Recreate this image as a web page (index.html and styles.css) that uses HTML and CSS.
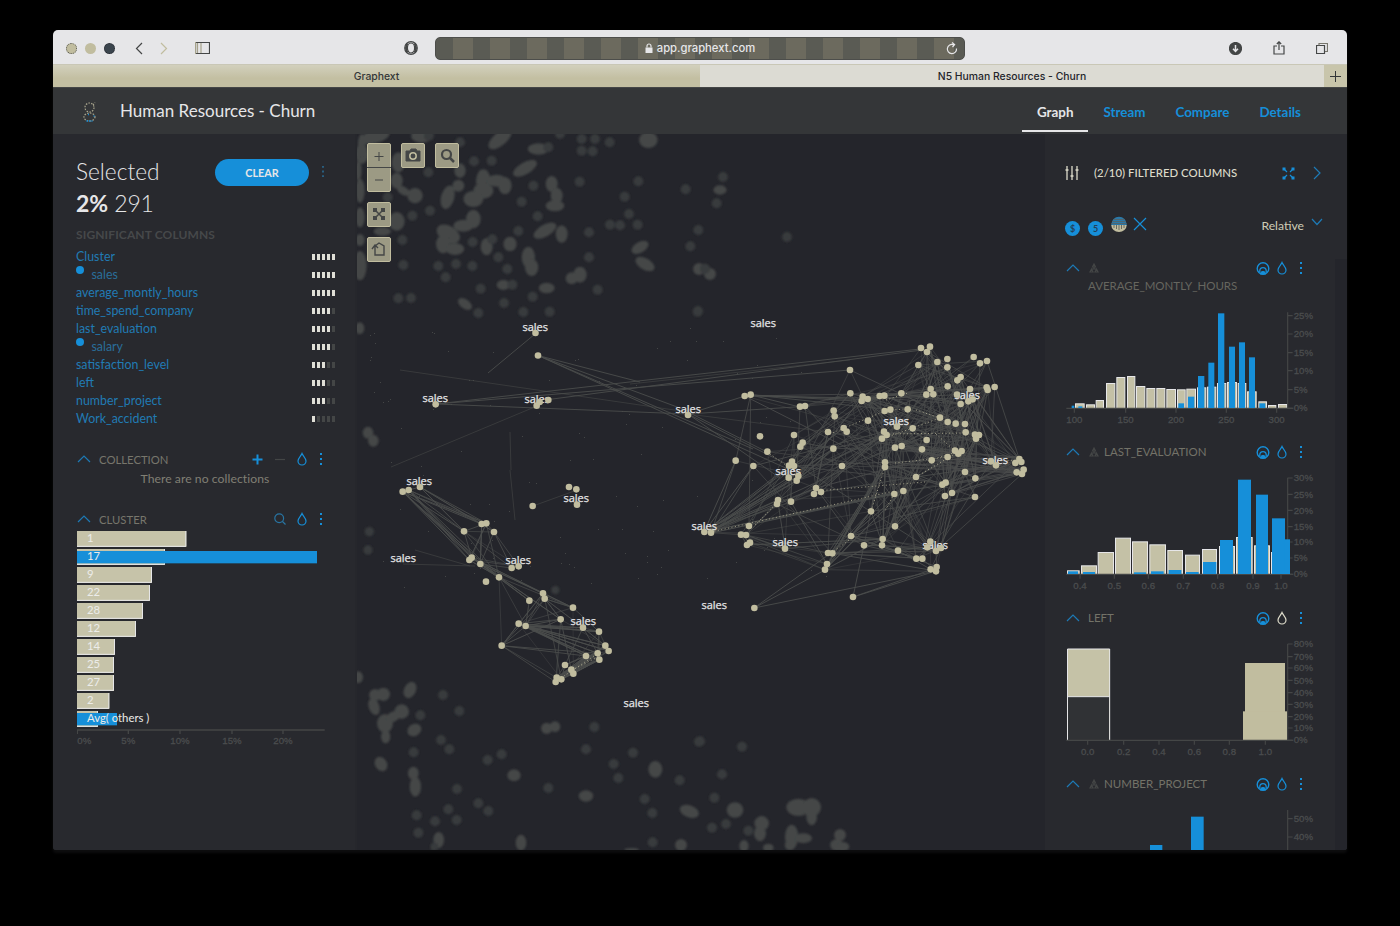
FILE: index.html
```html
<!DOCTYPE html>
<html lang="en">
<head>
<meta charset="utf-8">
<title>N5 Human Resources - Churn</title>
<link rel="stylesheet" href="styles.css">
</head>
<body>
<svg class="defs" width="0" height="0">
  <symbol id="up" viewBox="0 0 14 8"><path d="M1 7 7 1l6 6"/></symbol>
  <symbol id="drop" viewBox="0 0 12 14"><path d="M6 1.500C5 4 2 6 2 9a4 4 0 0 0 8 0C10 6 7 4 6 1.500Z"/></symbol>
  <symbol id="dots" viewBox="0 0 4 14"><path d="M1 1h2v2H1zM1 6h2v2H1zM1 11h2v2H1z" fill="currentColor" stroke="none"/></symbol>
  <symbol id="target" viewBox="0 0 14 14"><circle cx="7" cy="7.500" r="5.800" stroke-width="1.400"/><path d="M3.800 11V9.800a3.200 3.200 0 0 1 6.400 0V11" stroke-width="1.300"/><path d="M4.800 13a2.200 2.400 0 0 1 4.400 0Z" fill="currentColor"/></symbol>
  <symbol id="tree" viewBox="0 0 10 10"><path d="M5 1 3.500 4h3ZM2.500 6 1 9h3ZM7.500 6 6 9h3ZM5 4v2M2.500 6h5"/></symbol>
</svg>
<div class="window">
  <div class="toolbar">
    <div class="tools left">
      <i class="light"></i><i class="light two"></i><i class="light three"></i>
      <svg class="ic back" width="8" height="13" viewBox="0 0 8 13"><path d="M7 1 1.500 6.500 7 12"/></svg>
      <svg class="ic fwd" width="8" height="13" viewBox="0 0 8 13"><path d="m1 1 5.500 5.500L1 12"/></svg>
      <svg class="ic side" width="15" height="12" viewBox="0 0 15 12"><path d="M.5.500h14v11H.5z"/><path d="M.5 0v12M2.500 1v10M6 1v10" stroke="#a5a28b"/></svg>
    </div>
    <svg class="ic shield" width="14" height="14" viewBox="0 0 14 14"><circle cx="7" cy="7" r="6.300"/><ellipse cx="7" cy="7" rx="3.600" ry="5"/><path d="M3.500 2.500C1.500 5 1.500 9 3.500 11.500M10.500 2.500c2 2.500 2 6.500 0 9" stroke-width="2"/></svg>
    <div class="url">
      <svg width="8" height="10" viewBox="0 0 8 10"><path d="M2 4.500V3a2 2 0 0 1 4 0v1.500" fill="none" stroke="#e6e6e8" stroke-width="1.200"/><path d="M.5 4.500h7V10h-7z" fill="#e6e6e8"/></svg>
      <span>app.graphext.com</span>
      <svg class="reload" width="12" height="13" viewBox="0 0 12 13"><path d="M10.500 6.500A4.600 4.600 0 1 1 7.500 2.700M6 .5l2.600 2L6.500 5" fill="none" stroke="#e6e6e8" stroke-width="1.200"/></svg>
    </div>
    <div class="tools right">
      <svg class="ic" width="13" height="13" viewBox="0 0 13 13"><circle cx="6.500" cy="6.500" r="6" fill="#444646"/><path d="M6.500 3v6M4 6.800l2.500 2.700L9 6.800" stroke="#e6e6e8" stroke-width="1.500"/></svg>
      <svg class="ic" width="12" height="14" viewBox="0 0 12 14"><path d="M4 5H1v8h10V5H8"/><path d="M6 9V1M3.800 3 6 .8 8.200 3"/></svg>
      <svg class="ic" width="12" height="13" viewBox="0 0 12 13"><path d="M.5 3.500h8v8h-8z"/><path d="M3 3.500v-2h8.500v8H9" stroke="#77766c"/></svg>
    </div>
  </div>
  <div class="tabs">
    <div class="tab">Graphext</div>
    <div class="tab on">N5 Human Resources - Churn</div>
    <div class="plus"><svg width="11" height="11" viewBox="0 0 11 11"><path d="M5.500 0v11M0 5.500h11" stroke="#333638"/></svg></div>
  </div>
  <header class="head">
    <svg class="logo" width="16" height="22" viewBox="0 0 16 22"><g fill="none" stroke="#aaa78f" stroke-width="1.200" stroke-dasharray="1.500 1.300"><circle cx="7.500" cy="6.500" r="4.500"/><path d="M11 4l2-2.500"/><ellipse cx="7.500" cy="16" rx="5.500" ry="4"/></g><path d="M4.500 20h6M6 13.500h1M11.500 15h1" stroke="#168fd9" stroke-width="1.300" stroke-dasharray="1.500 1"/></svg>
    <h1>Human Resources - Churn</h1>
    <nav><a class="on">Graph</a><a>Stream</a><a>Compare</a><a>Details</a></nav>
  </header>
  <main class="body">
    <aside class="panel left-panel">
      <div class="sel"><span class="big">Selected</span><button>CLEAR</button><svg class="i kebab" width="4" height="13"><use href="#dots"/></svg></div>
      <div class="count"><b>2%</b> 291</div>
      <div class="sig">SIGNIFICANT COLUMNS</div>
      <div class="cols" id="cols"></div>
      <div class="sec first"><svg class="i dim" width="14" height="8"><use href="#up"/></svg><span>COLLECTION</span>
        <svg class="i add" width="11" height="11" viewBox="0 0 11 11"><path d="M5.500.500v10M.5 5.500h10" stroke-width="2"/></svg>
        <svg class="i minus" width="10" height="11" viewBox="0 0 10 11"><path d="M0 5.500h10"/></svg>
        <svg class="i blue d" width="12" height="14"><use href="#drop"/></svg><svg class="i blue m" width="4" height="14"><use href="#dots"/></svg></div>
      <div class="none">There are no collections</div>
      <div class="sec"><svg class="i dim" width="14" height="8"><use href="#up"/></svg><span>CLUSTER</span>
        <svg class="i find" width="12" height="12" viewBox="0 0 12 12"><circle cx="5.200" cy="5.200" r="4.400"/><path d="m8.500 8.500 3 3"/></svg>
        <svg class="i blue d" width="12" height="14"><use href="#drop"/></svg><svg class="i blue m" width="4" height="14"><use href="#dots"/></svg></div>
      <svg class="cluster" id="cluster" width="270" height="222" viewBox="72 300 810 666"></svg>
    </aside>
    <section class="graph">
      <svg id="graph" width="688" height="716" viewBox="357 134 688 716"></svg>
      <div class="ctl">
        <div class="stack">
          <div class="btn tall"><svg width="24" height="49" viewBox="0 0 24 49"><path d="M12 9v9M7.500 13.500h9M8 37h8M0 24.500h24"/></svg></div>
          <div class="btn"><svg width="24" height="24" viewBox="0 0 24 24"><path d="m8 8 8 8M16 8l-8 8" stroke-width="1.500"/><path d="M6 6h4v4H6zM14 6h4v4h-4zM6 14h4v4H6zM14 14h4v4h-4z" fill="#444646" stroke="none"/></svg></div>
          <div class="btn"><svg width="24" height="24" viewBox="0 0 24 24"><path d="M8 9 12 6l5 3v9H8zM5 12l3-4 3 3" stroke-width="1.400"/></svg></div>
        </div>
        <div class="btn"><svg width="24" height="24" viewBox="0 0 24 24"><path d="M5 8h4l1-2h5l1 2h3v10H5z" fill="#444646"/><circle cx="12" cy="13" r="3.200" stroke="#c1bd9f" stroke-width="1.500"/></svg></div>
        <div class="btn"><svg width="24" height="24" viewBox="0 0 24 24"><circle cx="11.500" cy="11.500" r="4.500" stroke-width="2.200"/><path d="m15 15 4 4" stroke-width="2.500"/></svg></div>
      </div>
    </section>
    <aside class="panel right-panel">
      <div class="filt">
        <svg class="i white" width="14" height="14" viewBox="0 0 14 14"><path d="M2 0v14M7 0v14M12 0v14M.5 4h3M5.500 10h3M10.500 4h3" stroke-width="1.300"/></svg>
        <span>(2/10) FILTERED COLUMNS</span>
        <svg class="i blue ex" width="13" height="13" viewBox="0 0 13 13"><path d="m1.500 1.500 3.500 3.500M11.500 1.500 8 5M1.500 11.500 5 8M11.500 11.500 8 8"/><path d="M.5.500h3v3h-3zM9.500.500h3v3h-3zM.5 9.500h3v3h-3zM9.500 9.500h3v3h-3z" fill="currentColor" stroke="none"/></svg>
        <svg class="i dim" width="8" height="14" viewBox="0 0 8 14"><path d="m1 1 6 6-6 6"/></svg>
      </div>
      <div class="chips">
        <span class="chip">$</span><span class="chip">5</span>
        <svg class="half" width="16" height="16" viewBox="0 0 16 16"><path d="M.3 8.500a7.700 7.700 0 0 1 15.400 0v1H.3z" fill="#2a78a8"/><path d="M2.500 3.500h11M1 5.500h14M.5 7.500h15" stroke="#4f6670"/><path d="M.3 9a7.700 7 0 0 0 15.400 0z" fill="#c1bd9f"/><path d="M3 9v3M5.500 9v4M8 9v5M10.500 9v4M13 9v3" stroke="#6a6a60"/></svg>
        <svg class="i blue x" width="14" height="14" viewBox="0 0 14 14"><path d="m1 1 12 12M13 1 1 13"/></svg>
        <span class="rel">Relative</span>
        <svg class="i dim dn" width="12" height="8" viewBox="0 0 12 8"><path d="m1 1 5 5.500L11 1"/></svg>
      </div>
      <div class="charts" id="charts"></div>
    </aside>
  </main>
</div>
<script src="main.js"></script>
</body>
</html>
```
FILE: styles.css
```css
* { box-sizing: border-box; }
body { margin: 0; padding: 30px 53px; height: 926px; background: #000; overflow: hidden; font-family: Lato, "Open Sans", sans-serif; color: #e6e6e8; }
svg { display: block; flex: none; }
.defs { position: absolute; }
.window { width: 1294px; height: 820px; border-radius: 5px 5px 3px 3px; overflow: hidden; background: #24252b; box-shadow: 0 3px 3px #0d0d0e; }
.toolbar { height: 35px; background: #e6e6e8; display: flex; align-items: center; padding: 2px 19px 0 13px; border-bottom: 1px solid #c9c7b6; }
.tools { display: flex; align-items: center; }
.tools.left { width: 338px; }
.tools.right { margin-left: auto; gap: 31px; }
.light { width: 11px; height: 11px; border-radius: 50%; background: #c1bd9f; border: 1px dotted #55564f; margin-right: 8px; }
.light.two { border: 0; }
.light.three { background: #3b454d; border-color: #24252b; margin-right: 20px; }
.ic { fill: none; stroke: #444646; stroke-width: 1.200; }
.fwd { stroke: #c1bd9f; margin-left: 17px; }
.side { margin-left: 27px; }
.url { width: 530px; height: 23px; margin-left: 17px; border-radius: 5px; background: repeating-linear-gradient(90deg, #5a5b54 0 17px, #6c6a5e 17px 37px); display: flex; align-items: center; justify-content: center; gap: 4px; font: 500 11.250px Inter, sans-serif; border: 1px solid #4d4e4b; position: relative; }
.reload { position: absolute; right: 6px; }
.tabs { height: 23px; display: flex; font: 500 10.400px/24px Inter, sans-serif; color: #333638; text-align: center; border-bottom: 1px solid #444646; }
.tab { width: 647px; background: linear-gradient(#d2d0bd, #c3bfa2 60%); }
.tab.on { width: 624px; background: #dcdbd3; color: #24252b; }
.plus { width: 23px; background: #c8c5ab; display: flex; align-items: center; justify-content: center; }
.head { height: 46px; background: #343638; display: flex; align-items: center; padding-left: 29px; }
.logo { margin-top: 2px; }
.head h1 { margin: -1px 0 0 22px; font-size: 17px; font-weight: 400; }
.head nav { margin-left: auto; display: flex; padding-right: 31px; font-size: 13.400px; font-weight: 700; color: #168fd9; height: 44px; align-self: flex-start; }
.head nav a { padding: 0 15px; line-height: 48px; }
.head nav .on { color: #e6e6e8; border-bottom: 2px solid #e6e6e8; }
.body { display: flex; height: 716px; }
.panel { width: 302px; background: #28292e; }
.left-panel { padding: 21px 0 0 23px; width: 304px; border-right: 2px solid #26272c; }
.i { fill: none; stroke: currentColor; stroke-width: 1.200; }
.blue { color: #168fd9; }
.dim { color: #1d7ab6; }
.kebab { color: #2a6387; }
.white { color: #dedccb; }
.sel { display: flex; align-items: center; height: 32px; }
.big { font-size: 22.700px; font-weight: 300; width: 139px; }
.sel button { width: 94px; height: 27px; border: 0; border-radius: 14px; background: #168fd9; color: #e6e6e8; font: 700 10.800px Lato, sans-serif; margin-right: 12px; padding: 0; margin-top: 3px; }
.count { font-size: 23px; line-height: 32px; font-weight: 300; letter-spacing: -.1px; }
.count b { font-weight: 700; }
.sig { font-size: 12px; line-height: 18px; color: #46484a; font-weight: 700; margin-top: 7px; letter-spacing: .12px; }
.cols { margin-top: 4px; }
.row { height: 18px; display: flex; align-items: center; font-size: 12.400px; color: #217bb4; padding-bottom: 1px; }
.row.sub { color: #2a6e9a; }
.row.sub::before { content: ""; width: 8px; height: 8px; border-radius: 50%; background: #168fd9; margin: -10px 7.500px 0 0; }
.meter { margin: 1px 20px 0 auto; display: flex; gap: 2px; }
.meter i { width: 3px; height: 6px; background: #444646; }
.meter .f { background: #e0dfd7; }
.sec { height: 18px; display: flex; align-items: center; margin-top: 23px; font-size: 11.300px; color: #77766c; padding: 0 32px 0 1px; }
.sec.first { margin-top: 22px; }
.sec span { margin: 0 auto 0 8px; }
.add { color: #168fd9; margin-right: 12px; }
.minus { color: #444646; margin-right: 11px; }
.find { color: #2874a2; margin-right: 10px; }
.sec .d { margin-right: 11px; }
.none { height: 18px; line-height: 19px; font-size: 12.200px; color: #807f74; padding-left: 64.500px; letter-spacing: .05px; margin-top: 1px; }
.none + .sec { margin-top: 23px; }
.cluster { margin: 2px 0 0 1px; }
.graph { width: 688px; position: relative; background: #24252b; }
.ctl { position: absolute; left: 10px; top: 9px; display: flex; gap: 10px; align-items: flex-start; }
.stack { display: flex; flex-direction: column; gap: 10px; }
.btn { width: 24px; height: 25px; border-radius: 2px; background: #9c9a84; border: 1px solid #c1bd9f; }
.btn svg { fill: none; stroke: #444646; margin: -1px; }
.btn.tall { height: 49px; }
.right-panel { padding: 28px 0 0 20px; }
.filt { display: flex; align-items: center; height: 22px; padding-right: 26px; font-size: 11.400px; color: #dedccb; font-weight: 500; }
.filt span { margin: -2px auto 0 15px; }
.ex { margin-right: 18px; }
.chips { height: 75px; display: flex; align-items: center; padding: 10px 24px 0 0; }
.chip { width: 15px; height: 15px; border-radius: 50%; background: #168fd9; color: #24405a; font: 700 9px/15px Lato, sans-serif; text-align: center; margin: 3px 8px 0 0; }
.half { margin-top: -6px; }
.x { margin: -5px 0 0 6px; }
.rel { margin: 0 7px 0 auto; font-size: 12.200px; color: #cfccb6; padding-bottom: 2px; }
.dn { margin-top: -9px; }
.charts { height: 591px; border-right: 12px solid #24252b; overflow: hidden; }
.ch { height: 18px; display: flex; align-items: center; padding: 0 32px 0 1px; font-size: 11.500px; color: #737268; }
.ch .tree { margin-left: 9px; color: #444646; }
.ch .nm { margin: -1px auto 0 5px; }
.ch .notree { margin-left: 8px; }
.ch .d { margin: 0 11px 0 6px; }
.wrap { height: 18px; font-size: 11.500px; line-height: 17px; color: #66665f; padding-left: 23px; }
.plot text, .cluster .ax { font: 29px "Liberation Sans", sans-serif; fill: #4b4d4e; stroke: #4b4d4e; stroke-width: .8px; }
```
FILE: main.js
```js
const $ = id => document.getElementById(id);
const BLUE = '#168fd9', GREY = '#444646', PALE = '#e6e6e8';
const rect = (x, y, w, h, f, s = '') => `<rect x="${x}" y="${y}" width="${w}" height="${h}" fill="${f}" ${s}/>`;

$('cols').innerHTML = [['Cluster', 5], ['sales', 5, 1], ['average_montly_hours', 5], ['time_spend_company', 4],
  ['last_evaluation', 4], ['salary', 4, 1], ['satisfaction_level', 3], ['left', 3], ['number_project', 3], ['Work_accident', 1]]
  .map(([n, v, s]) => `<div class="row${s ? ' sub' : ''}"><span>${n}</span><div class="meter">${
    [0, 1, 2, 3, 4].map(i => `<i${i < v ? ' class="f"' : ''}></i>`).join('')}</div></div>`).join('');

// Cluster bar chart
let c = '';
[['1', 400], ['17', 336], ['9', 297], ['22', 291], ['28', 270], ['12', 249], ['14', 186], ['25', 183], ['27', 183], ['2', 169], ['Avg( others )', 135]]
  .forEach(([n, w], i) => {
    const y = 303 + i * 54;
    c += rect(72, y, w - 72, 48, '#c6c3a9') + `<path d="M72 ${y + 46}H${w - 1.5}V${y}" fill="none" stroke="${PALE}" stroke-width="3"/>`;
    if (i === 1) c += rect(72, y + 6, 720, 37, BLUE);
    if (i === 10) c += rect(72, y + 6, 120, 37, BLUE);
    c += `<text x="102" y="${y + 33}" font-size="34" fill="#ecece9">${n}</text>`;
  });
c += `<path d="M72 900H815M73 900v12M226 900v12M381 900v12M537 900v12M690 900v12" stroke="${GREY}" stroke-width="4" fill="none"/>`;
[[94, '0%'], [226, '5%'], [381, '10%'], [537, '15%'], [690, '20%']].forEach(([x, t]) => c += `<text class="ax" text-anchor="middle" x="${x}" y="943">${t}</text>`);
$('cluster').innerHTML = c;

// Column histograms
const charts = [
  { name: 'AVERAGE_MONTLY_HOURS', wrap: true, y0: 483, h: 444, base: 822, top: 535,
    bars: [[90,29,808],[123,27,811],[152,25,798],[183,28,747],[214,27,729],[246,25,726],[273,28,756],[304,27,762],[334,27,762],[364,29,765],[396,26,766],[424,29,764],[456,28,760],[486,28,758],[516,28,747],[546,30,744],[578,26,747],[606,29,772],[640,26,802],[669,25,813],[699,28,810]],
    blue: [[80,8,815],[100,12,817],[400,17,808],[429,19,788],[459,19,726],[490,18,686],[519,19,538],[552,18,638],[582,18,625],[612,18,670],[643,18,808]],
    ys: [[545,'25%'],[600,'20%'],[656,'15%'],[710,'10%'],[767,'5%'],[822,'0%']], xs: [[88,'100'],[242,'150'],[393,'200'],[544,'250'],[695,'300']], xl: 866 },
  { name: 'LAST_EVALUATION', tree: true, y0: 93, h: 444, base: 432, top: 143,
    bars: [[66,38,421],[108,48,406],[158,49,366],[210,48,323],[261,48,334],[313,50,343],[367,47,360],[420,45,374],[471,45,357],[522,48,348],[573,50,321],[627,48,346],[678,48,366]],
    blue: [[69,30,424],[114,36,426],[267,36,427],[318,38,424],[371,38,420],[423,38,426],[474,40,396],[525,39,330],[579,39,149],[633,36,194],[681,39,265],[718,17,328]],
    ys: [[144,'30%'],[193,'25%'],[241,'20%'],[290,'15%'],[336,'10%'],[384,'5%'],[432,'0%']], xs: [[105,'0.4'],[208,'0.5'],[310,'0.6'],[415,'0.7'],[518,'0.8'],[624,'0.9'],[708,'1.0']], xl: 476 },
  { name: 'LEFT', light: true, y0: 81, h: 444, base: 420, top: 132, bars: [], blue: [],
    extra: rect(67,147,128,273,'#c5c2a7') + rect(69,290,124,130,'#303235') + `<path d="M67.500 420V147H194V420M68 290H193" fill="none" stroke="${PALE}" stroke-width="3"/>` + rect(600,189,120,231,'#c1bd9f') + rect(594,334,132,86,'#c1bd9f'),
    ys: [[132,'80%'],[170,'70%'],[204,'60%'],[241,'50%'],[278,'40%'],[313,'30%'],[350,'20%'],[384,'10%'],[420,'0%']], xs: [[128,'0.0'],[236,'0.2'],[342,'0.4'],[448,'0.6'],[553,'0.8'],[661,'1.0']], xl: 465 },
  { name: 'NUMBER_PROJECT', tree: true, y0: 579, h: 171, base: 800, top: 630, bars: [], blue: [[315,37,735],[438,38,650]], ys: [[656,'50%'],[711,'40%']], xs: [], xl: 0 }
];
$('charts').innerHTML = charts.map(d => {
  const tree = '<svg class="i tree" width="10" height="10"><use href="#tree"/></svg>';
  let s = '';
  d.bars.forEach(([x, w, y]) => s += rect(x + 1.5, y + 1.5, w - 3, d.base - y, '#c4c1a6', `stroke="${PALE}" stroke-width="3"`));
  s += d.extra || '';
  s += `<path d="M64 ${d.base + 1}H745M728 ${d.top}V${d.base}${d.ys.map(([y]) => `M728 ${y}h15`).join('')}${d.xs.map(([x]) => `M${x} ${d.base}v14`).join('')}" stroke="${GREY}" stroke-width="3.500" fill="none"/>`;
  d.blue.forEach(([x, w, y]) => s += rect(x, y, w, d.base - y, BLUE));
  d.ys.forEach(([y, t]) => s += `<text x="746" y="${y + 10}">${t}</text>`);
  d.xs.forEach(([x, t]) => s += `<text text-anchor="middle" x="${x}" y="${d.xl}">${t}</text>`);
  return `<div class="ch"><svg class="i dim" width="14" height="8"><use href="#up"/></svg>${d.tree || d.wrap ? tree : ''}<span class="nm${d.light ? ' notree' : ''}">${d.wrap ? '' : d.name}</span>
    <svg class="i blue" width="14" height="14"><use href="#target"/></svg><svg class="i ${d.light ? 'white' : 'blue'} d" width="12" height="14"><use href="#drop"/></svg><svg class="i blue" width="4" height="14"><use href="#dots"/></svg></div>
    ${d.wrap ? `<div class="wrap">${d.name}</div>` : ''}
    <svg class="plot" width="270" height="${d.h / 3}" viewBox="60 ${d.y0} 810 ${d.h}">${s}</svg>`;
}).join('');

// Network graph: selected nodes, grouped by area; coordinates are thirds of a pixel
const east = [[693,144],[720,140],[711,156],[742,186],[772,177],[772,202],[685,195],[480,210],[851,171],[870,190],[891,183],[914,261],[890,262],[893,270],[812,231],[802,241],[773,259],[722,267],[730,283],[709,284],[634,280],[583,287],[569,288],[518,290],[533,297],[515,303],[481,280],[164,288],[182,284],[840,267],[801,284],[835,304],[848,298],[812,312],[330,320],[345,318],[431,332],[434,349],[584,333],[601,329],[653,328],[534,362],[461,384],[470,395],[414,396],[621,380],[668,385],[582,395],[590,405],[576,416],[750,353],[773,366],[797,371],[825,372],[827,397],[855,404],[867,405],[858,416],[710,420],[696,448],[635,438],[615,443],[430,446],[312,405],[338,428],[331,440],[210,409],[232,455],[137,482],[190,498],[306,485],[297,497],[312,498],[296,533],[325,528],[320,542],[456,498],[585,487],[585,501],[725,481],[773,471],[795,452],[815,453],[805,461],[903,484],[918,496],[976,489],[988,477],[994,486],[1001,509],[980,517],[996,522],[825,516],[856,535],[678,531],[757,554],[767,548],[786,579],[765,588],[855,591],[613,582],[640,573],[378,564],[372,582],[393,576],[303,605],[264,600],[261,612],[543,634],[615,679],[177,678],[153,704],[168,705],[180,728],[171,735],[43,696],[63,698],[285,746],[483,708],[522,736],[578,717],[576,736],[624,752],[414,759],[427,760],[411,792],[405,809],[679,776],[697,776],[721,725],[712,742],[738,753],[753,744],[740,801],[722,808],[738,814],[489,891],[193,924]];
const west = [[143,335],[161,330],[195,321],[380,432],[394,430],[327,454],[417,456],[350,533],[343,540],[376,552],[470,564],[491,559],[432,592],[393,605],[564,640],[569,656],[523,662],[654,683],[617,718],[491,731],[512,738],[684,743],[732,755],[440,797],[751,797],[761,813],[728,820],[733,839],[693,828],[630,855],[649,869],[655,881],[605,893],[619,898],[602,906]];
const lone = [[242,73],[545,77],[580,60],[554,66],[642,321],[664,328],[666,374],[533,378],[540,-49],[549,-25],[999,105]];
const E = east.map(([x, y]) => [690 + x / 3, 300 + y / 3]), W = west.map(([x, y]) => [355 + x / 3, 380 + y / 3]);
const L = lone.map(([x, y]) => [355 + x / 3, 380 + y / 3]);
L[8] = [535.5, 333]; L[9] = [538, 355.5];
let seed = 11;
const rnd = () => (seed = (seed * 16807) % 2147483647) / 2147483647;
let lines = '';
const link = (a, b, o = .75, col = '#4b4d4c') => lines += `<path d="M${a[0].toFixed(1)} ${a[1].toFixed(1)}L${b[0].toFixed(1)} ${b[1].toFixed(1)}" stroke="${col}" opacity="${o}"/>`;
const mesh = (P, n, max) => { let k = 0, t = 0; while (k < n && t++ < 20000) { const a = P[rnd() * P.length | 0], b = P[rnd() * P.length | 0]; const d = Math.hypot(a[0] - b[0], a[1] - b[1]); if (a !== b && d < max * (.35 + rnd() * .65) && !(Math.min(a[0], b[0]) > 850 && Math.max(a[1], b[1]) > 560 && Math.min(a[1], b[1]) < 480 && Math.max(a[0], b[0]) > 960)) { link(a, b, .35 + rnd() * .6); k++; } } };
const dense = E.filter(p => p[1] < 565);
mesh(dense, 340, 200);
mesh(dense.filter(p => p[0] > 850), 110, 120);
mesh(E.filter(p => p[1] > 530 && p[1] < 575 && p[0] > 735), 45, 180);
mesh(W.slice(12), 80, 90);
mesh(W.slice(0, 13), 30, 90);
const near = (x, y) => E.reduce((m, p) => Math.hypot(p[0] - x, p[1] - y) < Math.hypot(m[0] - x, m[1] - y) ? p : m);
[[736,461],[753,466],[788,467],[796,475],[798,480],[778,502],[816,490],[894,494],[903,491],[833,449],[846,429]].forEach(([x, y]) => { link([704, 532], near(x, y), 1); link([711, 533], near(x, y), .85); });
[[1020,457],[1024,470],[1017,473]].forEach(p => [[885,462],[931,460],[958,451],[942,485],[948,493],[895,447],[885,467]].forEach(q => link(p, near(...q), .8)));
[[831,553],[825,569],[825,570],[883,546]].forEach(p => [[885,462],[885,467],[871,511],[903,491]].forEach(q => link(p, q, .9)));
[[895,526],[885,539]].forEach(p => [[922,440],[926,450],[910,400]].forEach(q => link(p, q, .7)));
[[[754,608],[936,571]],[[754,608],[831,553]],[[754,608],[825,570]],[[853,597],[936,571]],[[853,597],[864,545]],[[853,597],[936,568]],[[975,497],[895,518]],[[895,526],[931,477]],[[831,553],[916,558]],[[936,571],[831,553]],[[785,548],[778,502]]].forEach(([a, b]) => link(a, b, .95));
const hub = W[0];
[3, 4, 5, 7, 8, 9, 12].forEach(i => { link(hub, W[i], 1); link(W[1], W[i], .9); });
[3, 4, 6].forEach(i => link(W[2], W[i], .9));
[14, 16, 17, 18, 12].forEach(i => { link(W[7], W[i], .9); link(W[9], W[i], .9); });
[18, 21, 22, 24, 25, 26, 27, 28].forEach(i => { link(W[19], W[i], .9); link(W[20], W[i], 1); });
[32, 33, 34, 30, 31].forEach(i => [26, 27, 24, 28].forEach(j => link(W[i], W[j], 1)));
[19, 15, 14, 26, 28].forEach(i => link(W[23], W[i], .9));
const out = [[[538,355.5],[688,411]],[[538,355.5],[640,382]],[[538,355.5],[753,449]],[[538,355.5],[790,470]],[[436,404],[850,370]],[[436,404],[920,349]],[[436,404],[688,414]],[[545,400],[922,350]],[[535,334],[488,373]],[[688,414],[780,478]],[[688,414],[810,406]],[[688,414],[745,396]],[[688,414],[798,470]],[[688,412],[767,452]],[[745,396],[865,398]],[[751,395],[872,400]],[[751,395],[857,401]],[[751,395],[800,407]],[[400,370],[688,412]],[[391,467],[537,406]],[[415,550],[470,566]],[[403,564],[475,566]],[[510,432],[511,470]],[[510,470],[515,520]],[[688,414],[890,440]],[[533,506],[577,490]],[[630,384],[850,360]]];
out.forEach(([a, b], i) => link(a, b, i < 18 ? .95 : .55));
let flecks = '';
[[[894,494],[885,511]],[[871,511],[885,467]],[[767,452],[800,475]],[[830,434],[885,411]],[[886,400],[908,393]],[[885,410],[908,409]],[[916,410],[940,418]],[[886,434],[965,433]],[[882,439],[940,418]],[[931,460],[960,451]],[[916,477],[958,452]],[[816,491],[925,482]],[[711,532],[890,492]],[[755,525],[777,503]],[[895,463],[948,457]],[[990,461],[1020,460]],[[831,553],[855,536]],[[558,680],[600,652]],[[572,670],[600,656]],[[936,434],[955,451]]].forEach(([a, b]) => flecks += `<path d="M${a}L${b}" stroke="#bdb99b" stroke-width="1" stroke-dasharray="1 2.500" opacity=".8"/>`);

// Out-of-focus background nodes: [x, y, rx, ry, angle]
const blobs = [];
const add = (ox, oy, list) => list.forEach(([x, y, r = 15, q = r, a = 0]) => blobs.push([ox + x / 3, oy + y / 3, r / 3, q / 3, a]));
add(355, 134, [[60,8,45,20,-15],[200,5,32,22],[315,25],[435,15,42,20,-40],[550,45,32,17],[580,40],[615,0],[680,15],[720,15],[680,50],[713,52],[764,25],[880,18,28,24],[20,60,20,30],[10,110,10,30],[15,170,14,36],[125,140,18,24],[130,85,20,30],[180,185,23],[145,170,22,12,30],[98,190],[220,115],[222,5],[315,110,17,22],[357,82],[410,80],[510,103,40,18,-30],[385,140,22,34],[385,170,30,24],[355,195,30,24],[425,140,30,18],[450,155,20,26],[310,155,18],[278,190,20,36,15],[535,155],[590,150,18,24],[605,185,18,24],[600,215,28,17],[500,203],[674,143],[850,142],[992,166],[809,188],[822,240],[765,272],[795,274],[848,272],[225,230],[172,245],[125,262,24,28],[15,250,14,30],[355,255,22,28],[325,275,30,18],[280,300,38,24,30],[265,330,22,28],[300,345,28,18],[82,292,26,13],[142,318],[15,318,14,18],[353,324],[395,338,18,26],[412,316],[465,330,20,22],[490,291],[548,247],[570,290,38,18,-30],[620,300,18,26],[702,295],[520,370,20,32],[530,400,20,26],[430,370],[457,405],[702,370],[855,340,28,16,-30],[870,390,32,17,30],[1006,337],[1032,405,18],[15,395,20,44],[145,393],[250,396],[303,390],[352,396],[272,430],[377,464],[445,453,20,15],[472,452],[575,462,24,16],[675,422,20,24],[650,433,18],[728,467],[130,493],[168,492],[330,510,24,14,35],[370,537],[447,507],[505,534],[533,488],[584,533],[1028,533],[14,583,14,18],[20,36,12,36]]);
add(355, 660, [[10,52,14,18],[85,103,20],[60,105,18],[57,140,16,26,-20],[90,190,24,28],[92,230,14,20],[140,155,22],[115,170,24,15,-30],[165,90,18,26,25],[196,166],[178,210,22,18,-30],[264,105],[313,153],[258,240],[283,268],[176,277],[78,312,18,23,-30],[175,340,16,20],[181,380,17,30],[306,387],[185,466],[190,518],[240,484],[280,448],[305,480],[251,540,16,24],[370,430],[400,453],[398,300],[440,283],[477,346,20,18],[498,548,16,24],[575,205,17],[600,200,16],[718,201],[693,268],[834,278],[776,312],[790,354],[580,384],[693,408,22,17],[1032,245],[901,328,21,25],[974,361],[869,417],[892,459],[1003,454,30,18,20],[893,547],[978,555,18],[238,560,12],[830,570,22,6]]);
add(640, 700, [[180,124],[306,140],[246,223],[223,293],[285,330,25,23],[216,383],[258,372],[365,370,22],[360,400,18,24],[325,392],[312,438,14,18],[385,443,16,12],[475,322,36,26],[515,322,28],[515,350,16,26],[455,410,20,36],[490,415,26,15],[450,435,16],[600,405,18],[590,435,20,18],[608,440,20,14]]);
add(0, 0, [[2169,531],[2160,570,20,14],[2150,610],[2361,711],[2095,690],[2130,822,18],[2115,806],[2094,933],[1104,1298,16,18],[1120,1322,16,18],[1108,1595,14],[1104,1650,14],[1666,1770,12]]);
const dots = blobs.map(([x, y, r, q, a]) => { const s = r > 5.2 || q > 5.2; return `<ellipse cx="${x}" cy="${y}" rx="${r}" ry="${q}" transform="rotate(${a} ${x} ${y})" fill="${s ? '#444646' : '#383b3c'}"/>`; }).join('');
let specks = '';
for (let i = 0; i < 110; i++) specks += rect((370 + rnd() * 460).toFixed(0), (322 + rnd() * 270).toFixed(0), 1, 1, GREY);
const tags = [[535,331],[763,327],[435,402],[537,403],[688,413],[967,399],[896,425],[995,464],[419,485],[576,502],[788,475],[704,530],[785,546],[935,549],[403,562],[518,564],[583,625],[714,609.500],[636,707]];
const txt = tags.map(([x, y]) => `<text x="${x + .2}" y="${y - .5}" text-anchor="middle" font-size="11" font-family="Open Sans" stroke="${PALE}" stroke-width=".25" fill="${PALE}">sales</text>`).join('');
$('graph').innerHTML = `<defs><filter id="soft" x="-5%" y="-5%" width="110%" height="110%"><feGaussianBlur stdDeviation=".8"/></filter></defs><g filter="url(#soft)">${dots}</g>${specks}<g stroke-width=".95" fill="none">${lines}</g>${flecks}` +
  txt + [...E, ...W, ...L].map(([x, y]) => `<circle cx="${x}" cy="${y}" r="3.300" fill="#c1bd9f"/>`).join('');
```
